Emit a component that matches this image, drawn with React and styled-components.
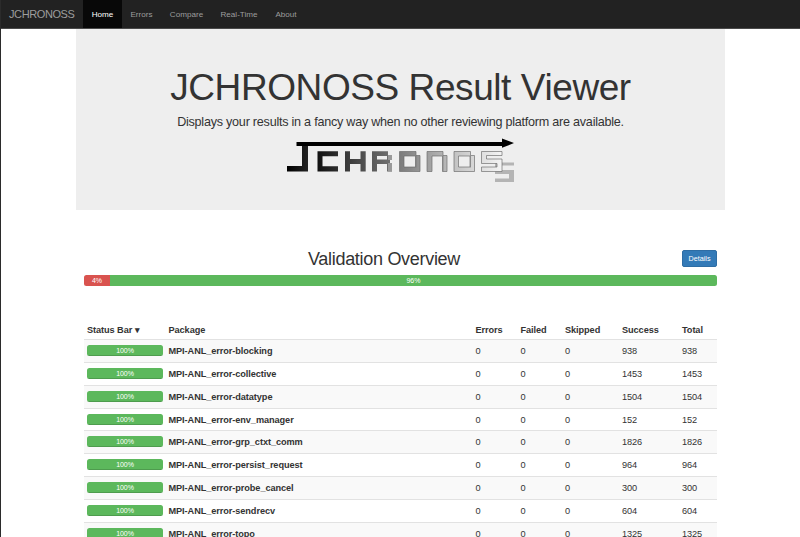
import React from "react";
import styled, { createGlobalStyle } from "styled-components";

const GlobalStyle = createGlobalStyle`
  * { box-sizing: border-box; }
  html, body { margin: 0; height: 537px; overflow: hidden; background: #fff; }
  body { font-family: "Liberation Sans", Arial, sans-serif; color: #333; }
`;

const Page = styled.div`
  height: 537px;
  overflow: hidden;
  border-left: 1px solid #2b2b2b;
`;
const Navbar = styled.nav`
  display: flex;
  height: 29px;
  margin-left: -1px;
  background: #222;
  border-bottom: 1px solid #4a4a4a;
`;
const Brand = styled.a`
  width: 83px;
  padding-left: 9px;
  font-size: 11px;
  letter-spacing: -0.4px;
  line-height: 28px;
  color: #9d9d9d;
`;
const NavItem = styled.a`
  width: ${(p) => p.$width}px;
  text-align: center;
  font-size: 8.1px;
  line-height: 29px;
  color: ${(p) => (p.$active ? "#fff" : "#9d9d9d")};
  background: ${(p) => (p.$active ? "#080808" : "transparent")};
`;
const Jumbotron = styled.header`
  width: 649px;
  height: 181px;
  margin-left: 75px;
  padding-top: 38px;
  background: #eee;
  text-align: center;
`;
const Title = styled.h1`
  margin: 0;
  font-size: 37px;
  letter-spacing: -0.42px;
  line-height: 42px;
  font-weight: 400;
  white-space: nowrap;
`;
const Lead = styled.p`
  margin: 3px 0 0;
  font-size: 12.6px;
  letter-spacing: -0.24px;
  line-height: 20px;
  white-space: nowrap;
`;
const LogoSvg = styled.svg`
  display: block;
  width: 240px;
  height: 50px;
  margin: 3px 0 0 204px;
`;
const Content = styled.main`
  width: 633px;
  margin: 38px 0 0 83px;
`;
const OverviewHead = styled.div`
  display: grid;
  grid-template-columns: 1fr 35px;
  height: 27px;
`;
const OverviewTitle = styled.h2`
  margin: 0;
  padding-left: 2px;
  font-size: 18px;
  letter-spacing: -0.3px;
  line-height: 22px;
  font-weight: 400;
  text-align: center;
`;
const DetailsButton = styled.button`
  height: 17px;
  margin-top: 2px;
  padding: 0;
  border: 1px solid #2e6da4;
  border-radius: 2px;
  background: #337ab7;
  color: #fff;
  font: 7.2px "Liberation Sans", Arial, sans-serif;
`;
const Progress = styled.div`
  display: flex;
  height: 11px;
  border-radius: 2.5px;
  overflow: hidden;
  background: #f5f5f5;
`;
const Bar = styled.div`
  width: ${(p) => p.$width};
  background: ${(p) => (p.$danger ? "#d9534f" : "#5cb85c")};
  box-shadow: inset 0 -1px 0 rgba(0, 0, 0, ${(p) => (p.$shaded ? 0.15 : 0)});
  color: #fff;
  font-size: 7px;
  line-height: 11px;
  text-align: center;
`;
const Table = styled.section`
  margin-top: 34px;
  font-size: 9.2px;
  letter-spacing: -0.08px;
`;
const Row = styled.div`
  display: grid;
  grid-template-columns: 81.5px 307px 45px 44.5px 57px 60px 1fr;
  align-items: center;
  height: 22.87px;
  padding-left: 3px;
  border-top: 1px solid #e2e2e2;
  background: ${(p) => (p.$striped ? "#f9f9f9" : "#fff")};
`;
const HeadRow = styled(Row)`
  height: 19px;
  border-top: 0;
  font-weight: 700;
`;
const StatusCell = styled.div`
  width: 76px;
  align-self: start;
  margin-top: 5px;
`;
const Cell = styled.span`
  white-space: nowrap;
`;
const PackageName = styled(Cell)`
  font-weight: 700;
`;

const nav = [["Home", 39], ["Errors", 39], ["Compare", 51], ["Real-Time", 54], ["About", 40]];
const columns = ["Status Bar ▾", "Package", "Errors", "Failed", "Skipped", "Success", "Total"];
const packages = [
  ["blocking", 938], ["collective", 1453], ["datatype", 1504],
  ["env_manager", 152], ["grp_ctxt_comm", 1826], ["persist_request", 964],
  ["probe_cancel", 300], ["sendrecv", 604], ["topo", 1325],
];

function Logo() {
  return (
    <LogoSvg viewBox="280 135 240 50" role="img" aria-label="JCHRONOSS">
      <defs>
        <linearGradient id="fade" gradientUnits="userSpaceOnUse" x1="317" y1="0" x2="502" y2="0">
          <stop offset="0" stopColor="#101010" />
          <stop offset="0.22" stopColor="#484848" />
          <stop offset="0.45" stopColor="#7c7c7c" />
          <stop offset="0.75" stopColor="#c4c4c4" />
          <stop offset="1" stopColor="#f4f4f4" />
        </linearGradient>
        <linearGradient id="stem" x1="0" y1="0" x2="1" y2="0">
          <stop offset="0" stopColor="#000" />
          <stop offset="1" stopColor="#222" />
        </linearGradient>
      </defs>
      <path d="M296.500 142H502v-3.500l12 4.600-12 4.600V146H296.500z" fill="#000" />
      <path d="M302 146h6v25.500h-21V166h15z" fill="url(#stem)" />
      <path d="M495 162.500h19v3h-14v4.500h14v12h-19v-3.500h14v-4.500h-14z" fill="#b4b4b4" />
      <g fill="url(#fade)">
        <path d="M317.500 151.300H338v5h-15.500v10H338v5.200h-20.500z" />
        <path d="M345 151.300h5v7.700h10.500v-7.700h5.200v20.200h-5.200V164H350v7.500h-5z" />
        <path d="M372 151.300h16v3.700h4v5h-2v3h2v8.500h-5V164h-10v7.500h-5zM377 156v3.500h10V156z" fillRule="evenodd" />
      </g>
      <path d="M388 155h4v5h-4zM388 163h4v8.500h-4z" fill="#999" />
      <g fill="url(#fade)" stroke="#686868" strokeWidth="0.65" fillRule="evenodd">
        <path d="M399.500 151.500H416v4h4v16h-20.500zM404 156v11h11.500v-11z" />
        <path d="M427 151.500h16v4h4v16h-4.500v-15.500H432v15.500h-5z" />
        <path d="M454 151.500h16.500v4h4v16H454zM458.500 156v11H470v-11z" />
        <path d="M481.500 151.500H502v4h-15.500v3.500H502v12.500h-20.500V167H497v-3.500h-15.500z" />
      </g>
      <g fill="none" stroke="#777" strokeWidth="0.65">
        <path d="M416 155.500v12M443 155.500v16M470.500 155.500v12" />
      </g>
    </LogoSvg>
  );
}

export default function App() {
  return (
    <Page>
      <GlobalStyle />
      <Navbar>
        <Brand>JCHRONOSS</Brand>
        {nav.map(([label, width], i) => (
          <NavItem key={label} $width={width} $active={i === 0}>{label}</NavItem>
        ))}
      </Navbar>
      <Jumbotron>
        <Title>JCHRONOSS Result Viewer</Title>
        <Lead>Displays your results in a fancy way when no other reviewing platform are available.</Lead>
        <Logo />
      </Jumbotron>
      <Content>
        <OverviewHead>
          <OverviewTitle>Validation Overview</OverviewTitle>
          <DetailsButton>Details</DetailsButton>
        </OverviewHead>
        <Progress>
          <Bar $width="4.1%" $danger>4%</Bar>
          <Bar $width="95.9%">96%</Bar>
        </Progress>
        <Table>
          <HeadRow>
            {columns.map((c) => <Cell key={c}>{c}</Cell>)}
          </HeadRow>
          {packages.map(([name, count], i) => (
            <Row key={name} $striped={i % 2 === 0}>
              <StatusCell>
                <Progress><Bar $width="100%" $shaded>100%</Bar></Progress>
              </StatusCell>
              <PackageName>MPI-ANL_error-{name}</PackageName>
              <Cell>0</Cell>
              <Cell>0</Cell>
              <Cell>0</Cell>
              <Cell>{count}</Cell>
              <Cell>{count}</Cell>
            </Row>
          ))}
        </Table>
      </Content>
    </Page>
  );
}
